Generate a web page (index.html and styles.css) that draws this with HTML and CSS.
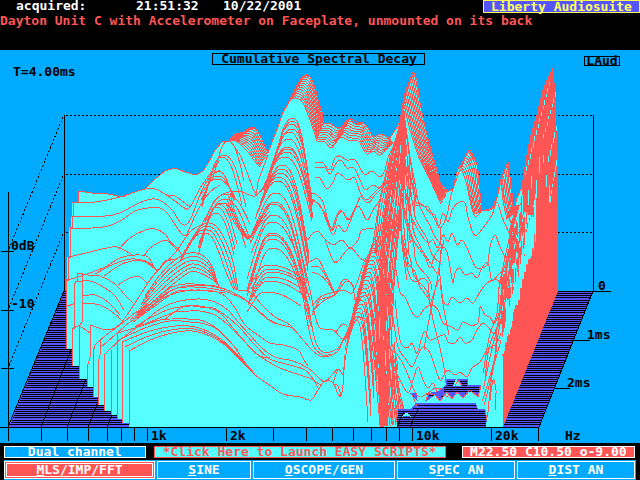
FILE: index.html
```
<!DOCTYPE html>
<html lang="en">
<head>
    <meta charset="UTF-8">
    <meta name="viewport" content="width=device-width, initial-scale=1.0">
    <title>Liberty Audiosuite</title>
    <link rel="stylesheet" href="styles.css">
</head>
<body>
    <!-- Measurement info -->
    <header>
        <div class="info-row">
            <span class="info-label">acquired:</span>
            <span class="info-time">21:51:32</span>
            <span>10/22/2001</span>
            <h1 class="brand">Liberty Audiosuite</h1>
        </div>
        <p class="description">Dayton Unit C with Accelerometer on Faceplate, unmounted on its back</p>
    </header>

    <!-- Waterfall plot -->
    <main>
        <svg class="plot" viewBox="0 50 640 393" role="img" aria-label="Cumulative Spectral Decay">
            <g class="grid">
                <path class="dotted" d="M66 115H593M66 174H593M66 232H593M63 117L8 251M63 176L8 310M63 234L8 368"/>
                <path d="M64 115V291M593 115V291M8 192V427"/>
            </g>
            <polygon class="floor" points="64,291 593,291 539,427 8,427"/>
            <path class="stripes" id="floorStripes"/>
            <path class="grid" d="M64 291L8 427M94 291L41 427M121 291L67 427M142 291L88 427M161 291L107 427M593 291L539 427"/>
            <path class="surface" id="surface"/>
            <path class="cliff" d="M553 68L555 88L558 167V291L503 427V347L510 313L515 293L523 267L533 230L535 190L520 222L522 187L525 167L530 138L537 115L543 90Z"/>
            <g class="lines" id="lines"></g>
            <g class="glints" id="glints"></g>
            <path class="floor" d="M397 409H411L416 403H476L478 409H485L487 418L486 427H397ZM425 402L428 393L440 391L446 384V379H468V385H481L478 397L470 390L463 398L457 392L452 399L447 392L440 401L435 395ZM410 393H416L418 402Z"/>
            <path class="stripes" id="holeStripes"/>
            <path class="grid" d="M410 427L418 409M397 427L404 411"/>
            <path class="surface" d="M402 417L405 413H408L411 417L409 416H404ZM456 379L459 382L462 386H453Z"/>
            <path class="rim" d="M411 393L418 408M425 402L429 393M428 393L435 395L440 401L447 392L452 399L457 392L463 398L470 390L478 397L481 386M455 386L458 380L462 386M397 409V417M485 410L487 420"/>
            <g class="grid">
                <path d="M0 427H539M1 251H14M1 310H14M1 368H14M593 291H611M574 340H590M554 388H570"/>
                <path d="M8 427V441M41 427V441M67 427V441M88 427V441M107 427V441M121 427V441M134 427V441M147 427V441M226 427V441M273 427V441M306 427V441M332 427V441M353 427V441M371 427V441M386 427V441M399 427V441M412 427V441M491 427V441M538 427V441"/>
                <rect x="212" y="53" width="212" height="11"/>
                <rect x="584" y="56" width="35" height="9"/>
            </g>
            <g class="labels">
                <text x="319" y="63" text-anchor="middle">Cumulative Spectral Decay</text>
                <text x="602" y="65" text-anchor="middle">LAud</text>
                <text x="13" y="76">T=4.00ms</text>
                <text x="11" y="250">0dB</text>
                <text x="11" y="308">-10</text>
                <text x="598" y="290">0</text>
                <text x="587" y="339">1ms</text>
                <text x="567" y="387">2ms</text>
                <text x="151" y="440">1k</text>
                <text x="230" y="440">2k</text>
                <text x="416" y="440">10k</text>
                <text x="495" y="440">20k</text>
                <text x="565" y="440">Hz</text>
            </g>
        </svg>
    </main>

    <!-- Status and menu -->
    <footer>
        <div class="status-row">
            <div class="status channel">Dual channel</div>
            <button class="status scripts" type="button">*Click Here to Launch EASY SCRIPTS*</button>
            <div class="status levels">M22.50 C10.50 o-9.00</div>
        </div>
        <nav class="menu">
            <button class="active" type="button"><span><u>M</u>LS/IMP/FFT</span></button>
            <button type="button"><span><u>S</u>INE</span></button>
            <button type="button"><span><u>O</u>SCOPE/GEN</span></button>
            <button type="button"><span>S<u>P</u>EC AN</span></button>
            <button type="button"><span><u>D</u>IST AN</span></button>
        </nav>
    </footer>

    <script src="script.js"></script>
</body>
</html>
```
FILE: styles.css
```
:root {
    --sky: #00aaff;
    --cyan: #55ffff;
    --red: #ff5555;
    --blue: #5555ff;
    --yellow: #ffff55;
}

* {
    margin: 0;
    padding: 0;
    box-sizing: border-box;
}

body {
    background: #000;
    color: #fff;
    font: bold 13px/12px "DejaVu Sans Mono", monospace;
    overflow-x: hidden;
}

button {
    font: inherit;
    color: inherit;
    cursor: pointer;
}

/* Header */
header {
    height: 50px;
    white-space: nowrap;
}

.info-row {
    display: flex;
    align-items: flex-start;
    height: 15px;
    padding-left: 16px;
    line-height: 12px;
}

.info-label {
    width: 120px;
}

.info-time {
    width: 87px;
}

.brand {
    margin-left: auto;
    width: 157px;
    border: 1px solid var(--yellow);
    background: var(--blue);
    color: var(--yellow);
    font-size: 13px;
    line-height: 11px;
    text-align: center;
}

.description {
    color: var(--red);
}

/* Plot */
.plot {
    display: block;
    width: 100%;
    background: var(--sky);
    shape-rendering: crispEdges;
}

.grid {
    fill: none;
    stroke: #000;
}

.dotted {
    stroke-dasharray: 2 2;
}

.floor {
    fill: var(--blue);
}

.stripes {
    fill: #000;
}

.surface {
    fill: var(--cyan);
}

.cliff {
    fill: var(--red);
}

.lines,
.rim {
    fill: none;
    stroke: var(--red);
}

.glints {
    fill: none;
    stroke: var(--cyan);
}

/* Status row */
.status-row {
    display: flex;
    height: 17px;
    padding: 3px 5px 0 4px;
}

.status {
    height: 12px;
    border: 1px solid #fff;
    line-height: 10px;
    text-align: center;
    white-space: nowrap;
}

.channel {
    flex: 141;
    margin-right: 8px;
    background: var(--sky);
}

.scripts {
    flex: 293;
    margin-right: 16px;
    border-color: var(--red);
    background: var(--cyan);
    color: var(--red);
}

.levels {
    flex: 173;
    background: var(--red);
}

/* Menu */
.menu {
    display: grid;
    grid-template-columns: 151fr 94fr 142fr 118fr 118fr;
    gap: 2px;
    margin: 0 4px;
    padding: 1px 1px 1px 0;
    background: var(--sky);
}

.menu button {
    height: 18px;
    border: 1px solid #fff;
    background: var(--sky);
    line-height: 14px;
}

.menu .active {
    padding: 1px;
    background: var(--red);
}

.active span {
    display: block;
    border: 1px solid #fff;
    line-height: 12px;
}
```
FILE: script.js
```
const SVG_NS = 'http://www.w3.org/2000/svg';
const lines = document.getElementById('lines');
const glints = document.getElementById('glints');

function addPath(parent, d) {
    const path = document.createElementNS(SVG_NS, 'path');
    path.setAttribute('d', d);
    parent.appendChild(path);
}

// "x,y x,y ..." to an array of points
function parse(text) {
    return text.trim().split(/\s+/).map(pair => pair.split(',').map(Number));
}

// Rounded curve through all points
function smooth(p) {
    let d = 'M' + p[0];
    for (let i = 0; i < p.length - 1; i++) {
        const a = p[i - 1] || p[i];
        const b = p[i];
        const c = p[i + 1];
        const e = p[i + 2] || c;
        d += 'C' + [b[0] + (c[0] - a[0]) / 6, b[1] + (c[1] - a[1]) / 6,
            c[0] - (e[0] - b[0]) / 6, c[1] - (e[1] - b[1]) / 6, c[0], c[1]].join(' ');
    }
    return d;
}

function curve(text) {
    addPath(lines, smooth(parse(text)));
}

// Curves spread evenly between two curves with the same number of points
function bundle(from, to, count, jitter = 0) {
    const a = parse(from);
    const b = parse(to);
    for (let n = 0; n < count; n++) {
        const t = n / (count - 1);
        addPath(lines, smooth(a.map((p, i) => [
            p[0] + (b[i][0] - p[0]) * t + jitter * Math.sin(n * 5 + i * 3),
            p[1] + (b[i][1] - p[1]) * t + jitter * Math.cos(n * 3 + i * 7)
        ])));
    }
}

// Bell shaped ridge: peak, then width and drop on both sides
function ridge(x, y, wl, hl, wr, hr) {
    addPath(lines, `M${x - wl} ${y + hl}C${x - wl * 0.5} ${y + hl * 0.3} ${x - wl * 0.4} ${y} ${x} ${y}` +
        `C${x + wr * 0.4} ${y} ${x + wr * 0.6} ${y + hr * 0.3} ${x + wr} ${y + hr}`);
}

// One pixel high bar from x1 to x2
function stripe(x1, x2, y) {
    return `M${x1} ${y}H${x2}V${y + 1}H${x1}Z`;
}

// Floor stripes, one for each time slice
let floor = '';
for (let i = 0; i < 63; i++) {
    const y = 291 + Math.round(i * 135 / 63);
    const shift = Math.round((y - 291) * 55 / 136);
    floor += stripe(64 - shift, 593 - shift, y);
}
document.getElementById('floorStripes').setAttribute('d', floor);

// Floor seen through the gap near 10 kHz
let hole = '';
for (let y = 411; y < 426; y += 2) {
    hole += stripe(397, 486, y);
}
for (let y = 381; y < 392; y += 2) {
    hole += y < 386 ? stripe(447, 467, y) : stripe(444, 479, y);
}
hole += stripe(429, 434, 395) + stripe(441, 444, 396) + stripe(465, 468, 393) + stripe(474, 479, 391) +
    stripe(416, 476, 405) + stripe(413, 477, 408);
document.getElementById('holeStripes').setAttribute('d', hole);

// Outline of the surface
const back = '78,191 92,193 108,194 122,197 135,192 145,189 155,179 165,171 175,168 185,172 196,175 203,171 210,160 ' +
    '215,150 222,142 229,141 235,134 243,132 250,128 255,128 260,135 265,147 268,153 272,142 278,127 283,112 290,100 ' +
    '297,85 302,77 305,75 310,77 315,87 318,100 322,112 324,123 331,124 337,128 342,127 345,122 350,119 354,123 363,123 ' +
    '368,128 373,137 380,134 390,138 395,130 400,122 402,108 405,93 410,82 414,73 417,80 420,103 425,127 430,148 433,157 ' +
    '437,170 440,183 445,188 448,192 453,188 455,180 458,168 462,167 465,157 469,150 473,157 477,165 479,183 481,203 ' +
    '482,211 492,208 497,197 500,182 505,170 508,163 510,177 512,193 513,215 517,198 522,187 525,167 530,138 537,115 543,90 548,78 553,68';
document.getElementById('surface').setAttribute('d',
    'M' + back.replace(/ /g, 'L') + 'L558 167V291L503 427H129' +
    'V423H122V419H117V415H111V411H104V405H98V397H93V387H87V379H79V366H72V349H67V257H69V227H71V216H72V202H78Z');
addPath(lines, 'M' + back.replace(/ /g, 'L'));
addPath(lines, 'M78 191V202H73V216H72V227H70V257H68V280H66V349M72 366V330L74 327V285L77 281V273H83M79 379V327L82 322V300L83 275' +
    'M87 387V368L90 357V325M93 397V352L95 345M98 405V363L100 355V340M104 411V355M111 415V350M117 419V333M122 423V342M129 425V351');

// Low frequency slices
curve('72,202 95,202 120,197 135,192 145,189 155,189 165,194 175,201 183,207 188,209 193,202 200,188 207,178 220,160');
curve('168,196 175,196 182,201 190,207');
curve('71,216 105,216 120,213 135,205 147,200 155,199 163,202 172,210 180,222 185,225 190,220 195,208 202,190 210,177 220,170');
curve('69,228 92,228 108,226 122,220 135,211 148,208 160,208 168,214 178,229 185,236 190,227 200,206 210,192 220,185');
curve('69,257 90,252 112,247 120,248 134,256');
curve('118,250 130,238 145,230 155,229 165,234 170,241 178,249 182,256');
curve('144,256 150,248 162,241 168,241 177,250');
curve('66,280 75,278 90,273 105,267 120,258 135,255 148,257 157,271 165,261 177,259');
curve('95,274 110,266 125,260 135,259 148,262 158,270 165,262 175,259');
curve('104,276 120,265 132,261 145,262 155,269');
curve('66,307 75,303');
curve('77,273 88,275 100,276 115,284 125,295 133,303');
curve('75,282 90,281 105,288 115,296 124,310');
curve('83,296 95,295 108,302 120,315');
curve('83,303 100,305 115,314 121,320');
curve('72,330 79,326 90,333');
curve('90,325 108,330 120,324 135,303 150,280 160,268 175,253 190,232 203,224');
curve('118,285 130,278 140,277 148,284');

// Ridge at 2 kHz
bundle('235,134 243,132 250,128 256,129 262,140 268,153', '229,141 236,141 242,146 248,152 254,160 260,167', 11);
[[228, 141, 16, 40], [224, 155, 22, 52], [222, 157, 20, 48], [218, 171, 16, 30], [218, 176, 17, 24],
    [217, 179, 18, 18], [226, 194, 24, 30], [225, 199, 26, 44], [222, 203, 24, 45], [219, 204, 18, 40], [217, 207, 18, 42], [216, 213, 18, 42]]
    .forEach(p => ridge(p[0], p[1], p[2], p[3], p[2], p[3]));
curve('230,141 240,155 248,175 256,195 258,182 268,155');
curve('205,222 215,200 229,192 242,192 255,196 265,185');
bundle('182,256 190,242 200,227 208,223 216,226 225,240 233,262 238,290', '180,262 188,248 196,236 204,233 211,236 218,250 226,272 234,290', 4);
bundle('145,296 160,275 175,260 190,253 202,255 212,266 218,285', '135,318 155,300 172,285 190,272 200,273 210,278 220,286', 6);
bundle('230,193 236,215 245,233 250,236 258,222 268,204', '226,203 234,222 245,237 250,238 259,226 270,215', 4);
bundle('130,320 150,304 170,288 185,284 205,285 225,289', '133,322 155,306 175,292 190,290 208,291 225,293', 3);

// Wide slices at the front
curve('95,345 105,336 120,325 135,313 150,304 170,291 185,286 200,285 215,286 227,290 240,296 252,305 265,317 278,324 292,328 303,340 312,350 323,357 337,352 343,340 350,325 356,308 361,298 366,296 371,305 376,330 380,370 383,425');
curve('100,348 115,335 130,322 145,312 165,297 185,291 200,290 213,291 225,296 235,308 245,325 258,335 270,343 283,345 298,350 304,360 308,366');
curve('104,355 120,340 140,325 160,309 180,301 200,299 215,302 228,310 238,322 250,335 262,348 275,357 293,361 308,368 318,377 325,382 331,376 338,369 343,373 345,355');
curve('135,327 150,318 170,309 190,306 200,307 213,308 225,315 240,328 255,345 270,359 290,365 305,370 315,381 322,386');
curve('140,326 155,320 175,312 190,311 200,311 215,315 228,325 243,340 258,355 278,367 300,375 313,380 318,388');
curve('165,319 185,306 205,307 220,313 233,328 248,345 260,356 270,358');
curve('117,333 135,328 160,320 180,319 200,320 215,327 230,342 238,350');
curve('117,341 145,328 170,321 190,322 205,324 218,330 233,345 248,367');
bundle('122,342 150,331 175,326 195,327 213,334 228,345 245,363 255,374', '129,351 150,340 172,333 192,331 210,336 225,345 238,358 255,375', 3);
curve('255,375 268,384 283,394 300,397 311,400 318,390 325,381 333,383 338,394 341,396 343,385 345,360 350,335 356,320 360,317 366,320 371,335 375,370 380,425');
curve('238,290 250,292 262,305 275,317 290,325 303,340');
curve('225,291 245,300 258,310 270,321 278,324');

// Ridge at 3.5 kHz
bundle('290,100 297,85 305,75 312,80 318,100 324,123', '283,113 290,101 296,98 303,103 310,120 317,141', 12);
[[293, 118], [293, 121], [292, 124], [292, 129], [290, 132], [289, 139], [288, 147], [288, 149], [287, 152], [285, 157]]
    .forEach((p, i) => ridge(p[0], p[1], 24, 62 - i * 3, 18 + i, 82 - i * 2));
[[283, 165], [282, 169], [281, 173], [279, 177], [278, 181], [276, 193], [275, 202], [274, 204], [274, 215]]
    .forEach((p, i) => ridge(p[0], p[1], 23, 38, 26 + i, 90));
[[272, 222], [272, 233], [272, 235], [272, 239], [273, 248]]
    .forEach(p => ridge(p[0], p[1], 25, 57, 38, 78));
[[268, 265], [269, 269], [270, 272], [269, 277], [268, 281], [265, 292]]
    .forEach(p => ridge(p[0], p[1], 18, 20, 36, 14));
curve('301,279 308,305 315,340 323,352 337,349 345,338');
curve('302,286 306,315 313,345 323,355 331,354');
curve('296,230 303,260 310,290 315,315 320,328 333,330 343,339 349,328 356,300');

// Slices between 4 and 7 kHz
bundle('324,124 331,124 337,128 342,127 350,119 357,122 363,123 368,128 373,137 380,134 386,136 390,138', '317,142 325,142 331,148 338,140 342,137 348,140 358,141 362,147 367,154 374,151 380,155 393,143', 9);
curve('315,162 323,163 330,170 335,158 340,156 347,160 355,160 360,168 365,175 372,171 380,177 385,170 388,158 395,143');
curve('315,168 325,168 330,174 337,162 342,161 347,168 354,168 360,180 365,190 373,185 380,188 387,180 391,160');
curve('315,178 320,178 327,189 333,182 337,173 343,176 348,180 355,178 360,192 367,200 372,195 380,187 386,180');
curve('308,192 317,195 323,202 328,220 333,230 338,215 343,212 348,220 355,210 360,197 368,203 375,195 385,185');
curve('308,196 317,203 324,212 331,230 336,217 341,210 348,219 352,214 360,198');
curve('310,200 320,205 327,222 333,235 338,225 345,232 350,222 358,206 367,220 373,210 380,200');
curve('308,240 313,233 319,232 324,238 333,245 342,240 350,248 358,240 362,230 375,229');
curve('325,240 333,260 338,261 350,248 360,258 366,261');
bundle('310,262 318,259 325,272 335,293', '312,272 320,275 328,283 335,295', 3);
curve('313,305 322,296 335,292 344,290 352,293 358,280 365,260 373,250');
curve('312,315 320,300 335,295 345,282 353,285 355,300 362,285');
curve('312,312 322,302 335,294 342,281 348,280 355,290');
curve('335,333 343,324 349,328');
curve('333,383 338,370 343,375');
curve('334,384 338,386 341,396');
for (let i = 0; i < 22; i++) {
    ridge(378 - i, 236 + i * 4, 11 + i % 4, 30, 11 + i % 3, 60 + i * 2);
}

// Steep ridge at 9 kHz
bundle('405,93 410,80 414,73 420,103 425,127 433,157 441,185 448,192', '402,115 403,108 404,105 408,122 413,140 420,160 430,180 441,204', 11);
bundle('401,120 394,160 388,200 380,260 377,330 380,426', '405,110 405,150 403,200 396,260 391,340 387,426', 18, 1);
bundle('402,118 392,150 380,200 372,250', '403,112 395,160 388,210 384,260', 8, 1);
bundle('404,112 409,150 414,185 416,205', '403,120 403,180 402,230 406,280', 7, 1);
bundle('386,330 390,370 396,425', '380,300 382,370 386,425', 7, 1);

// High frequency slices
bundle('462,167 469,150 477,165 479,185 482,211', '457,170 461,168 466,175 470,195 474,215', 8);
bundle('500,182 508,163 510,177 513,215', '499,190 501,183 503,200 507,220', 7);
[
    '406,170 413,203 423,205 430,213 435,215 439,226 443,213 448,222 452,210 458,203 465,203 468,217 473,233 477,235 483,228 492,215 497,202 502,217 510,235',
    '408,165 414,190 421,205 428,207 434,218 440,228 447,215 451,195 457,178 461,170 466,182 474,215 482,211 492,209 497,198 501,185 507,212 514,230',
    '405,190 410,213 417,228 427,242 433,240 438,248 443,235 448,242 452,233 457,245 462,240 467,248 472,260 477,268 487,265 490,247 495,235 500,247 508,262',
    '402,200 410,230 415,243 425,257 430,268 435,255 442,247 447,252 451,273 453,283 455,273 460,268 465,275 472,273 477,278 482,268 488,263 492,280 500,273 508,270',
    '400,220 404,252 410,277 417,282 422,278 428,283 430,303 435,290 440,280 443,300 448,305 452,297 460,303 467,298 473,303 480,292 487,283 497,280 503,287',
    '396,270 400,292 405,297 412,312 418,317 425,308 432,305 438,310 443,323 452,327 458,330 463,322 470,325 478,323 480,307 485,315 490,317 495,323 502,303',
    '395,300 400,340 407,348 412,343 417,353 422,337 425,332 430,340 438,337 445,335 448,342 455,343 460,337 465,343 472,340 477,330 483,323 488,327 495,333 503,313',
    '393,317 398,347 405,358 412,367 417,357 423,347 430,353 435,367 440,380 445,373 448,370 455,375 460,372 467,377 472,368 480,362 487,350 497,343 503,327',
    '393,367 400,380 408,393 413,380 418,367 423,380 428,388 433,383 438,393 442,388 447,397 453,385',
    '394,350 402,362 408,375 414,390 420,397 428,393 436,388 444,392',
    '402,240 408,262 415,272 420,287 429,300 433,320 438,340 443,362 447,390',
    '440,228 441,250 438,275 434,295 428,325 424,350',
    '444,240 440,262 441,290 445,315 449,335'
].forEach(curve);
bundle('409,150 414,178 420,205 428,225 437,240 443,250', '399,210 404,235 409,258 415,275 424,290 431,301', 5, 2);
bundle('394,340 396,365 399,385 403,410', '389,365 391,360 394,385 397,423', 8, 2);
curve('386,425 389,405 392,402 396,415 398,425');
bundle('512,225 506,250 500,285 496,315 490,340 482,375', '515,240 510,265 505,300 501,335 494,370 486,415', 6, 2);
curve('490,400 493,380 496,390 495,410');

// Ragged edge of the steep cut-off
let seed = 7;
function random() {
    seed = (seed * 1103515245 + 12345) % 2147483648;
    return seed / 2147483648;
}
for (let x = 501; x < 536; x++) {
    const solid = 345 - (x - 503) * 3.6;
    for (let y = solid - 95; y < solid - 4; y += 12 + random() * 12) {
        if (x > 508 || y > 270) {
            addPath(lines, `M${x} ${Math.max(y, 205)}V${y + 14}`);
        }
    }
    addPath(glints, `M${x} ${solid - 10 - random() * 30}V${solid + random() * 14}`);
}
// Slanted glints on the back wall
[[549, 82, 524, 175], [555, 92, 543, 135], [556, 126, 547, 160], [556, 160, 549, 200]].forEach(g => {
    for (let y = g[1]; y < g[3]; y += 6) {
        const x = Math.round(g[0] + (g[2] - g[0]) * (y - g[1]) / (g[3] - g[1]));
        addPath(glints, `M${x} ${y}V${y + 3 + random() * 3}`);
    }
});
[[539, 157, 16], [543, 155, 8], [536, 180, 18], [546, 175, 12], [531, 176, 12], [528, 190, 15], [534, 200, 18], [522, 195, 20], [525, 212, 22], [518, 212, 20], [530, 215, 14], [549, 185, 18]].forEach(g => {
    addPath(glints, `M${g[0]} ${g[1]}V${g[1] + g[2]}`);
});
```
